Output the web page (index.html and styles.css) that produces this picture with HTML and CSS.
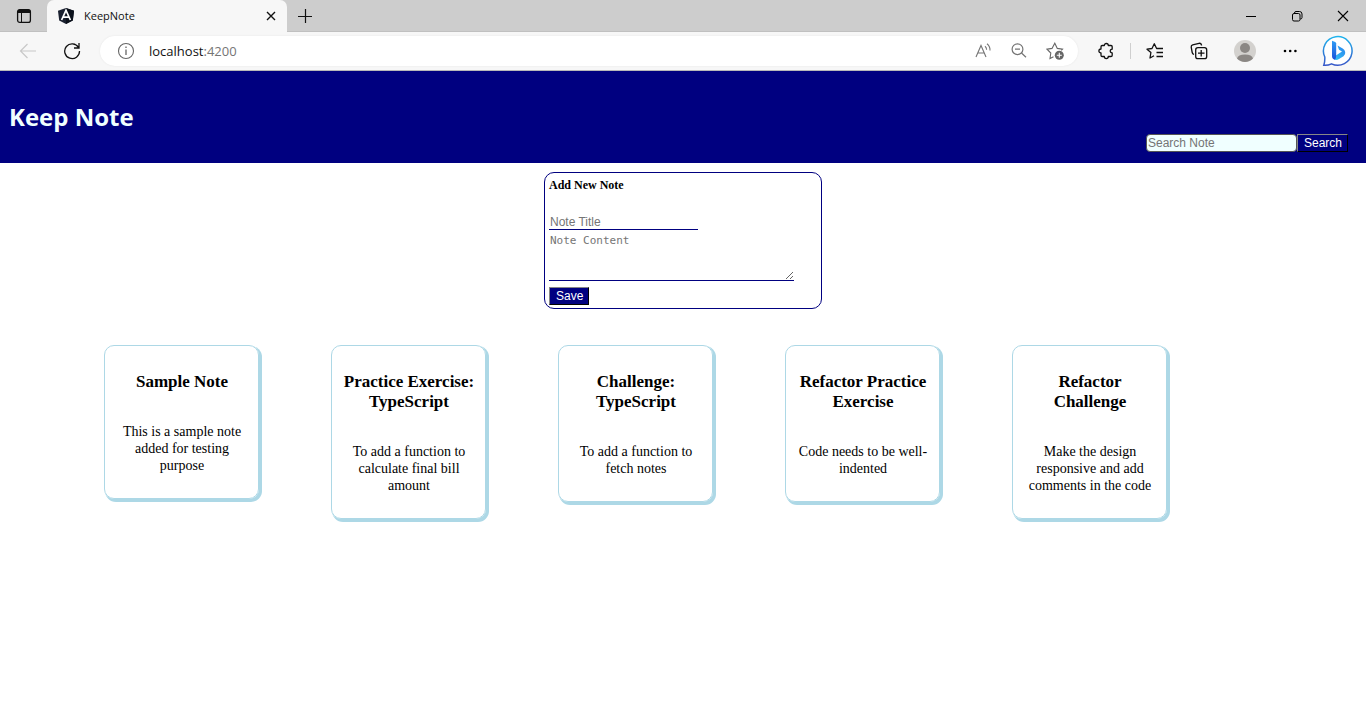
FILE: index.html
```html
<!DOCTYPE html>
<html lang="en">
<head>
<meta charset="utf-8">
<title>KeepNote</title>
<link rel="stylesheet" href="styles.css">
</head>
<body>
<div class="browser">
  <div class="tab-strip">
    <button class="icon-btn tab-actions" aria-label="Tab actions"><svg width="16" height="16" viewBox="0 0 16 16"><rect x="1.6" y="1.6" width="12.8" height="12.8" rx="2.2" fill="none" stroke="#111" stroke-width="1.3"/><path d="M1.6 5V3.6a2 2 0 0 1 2-2h8.8a2 2 0 0 1 2 2V5z" fill="#111"/><path d="M5.500 5v9" stroke="#111"/></svg></button>
    <div class="tab">
      <svg width="18" height="18" viewBox="0 0 18 18"><path d="M9 1 17 3.7 15.8 13.6 9 17 2.2 13.6 1 3.7z" fill="#1b2130"/><path d="M9 1 17 3.7 15.8 13.6 9 17z" fill="#0c111b"/><path d="M4.6 13 9 3.4 13.4 13M6.4 10.2h5.2" fill="none" stroke="#fff" stroke-width="1.7"/></svg>
      <span class="tab-title">KeepNote</span>
      <button class="icon-btn" aria-label="Close tab"><svg width="10" height="10" viewBox="0 0 10 10"><path d="M1 1l8 8M9 1l-8 8" stroke="#111" stroke-width="1.4"/></svg></button>
    </div>
    <button class="icon-btn new-tab" aria-label="New tab"><svg width="16" height="16" viewBox="0 0 16 16"><path d="M8.5 1v14M1 8.500h14" stroke="#111" stroke-width="1.2"/></svg></button>
    <div class="window-controls">
      <button class="icon-btn" aria-label="Minimize"><svg width="12" height="12" viewBox="0 0 12 12"><path d="M1 6.500h10" stroke="#000"/></svg></button>
      <button class="icon-btn" aria-label="Restore"><svg width="12" height="12" viewBox="0 0 12 12" fill="none" stroke="#000"><rect x="1.500" y="3.500" width="7.500" height="7.500" rx="1.500"/><path d="M3.500 3.300V3Q3.500 1.500 5 1.500h3.500q2.500 0 2.500 2.500v3.500q0 1.500-1.700 1.500"/></svg></button>
      <button class="icon-btn" aria-label="Close window"><svg width="12" height="12" viewBox="0 0 12 12"><path d="M1 1l10 10M11 1 1 11" stroke="#000" stroke-width="1.1"/></svg></button>
    </div>
  </div>
  <div class="toolbar">
    <button class="icon-btn nav-btn" aria-label="Back"><svg width="18" height="18" viewBox="0 0 18 18"><path d="M17 9H1.500M8.500 2 1.500 9l7 7" fill="none" stroke="#c8c8c8" stroke-width="1.2"/></svg></button>
    <button class="icon-btn nav-btn" aria-label="Refresh"><svg width="18" height="18" viewBox="0 0 18 18"><path d="M15.500 5.500A7.400 7.400 0 1 0 16.500 9M16 1v5h-5" fill="none" stroke="#111" stroke-width="1.3"/></svg></button>
    <div class="address">
      <svg width="18" height="18" viewBox="0 0 18 18"><circle cx="9" cy="9" r="7.500" fill="none" stroke="#666" stroke-width="1.1"/><path d="M9 7.500v5.500M9 4.600v1.500" stroke="#666" stroke-width="1.3"/></svg>
      <span class="url">localhost<span class="port">:4200</span></span>
      <div class="address-actions">
        <button class="icon-btn" aria-label="Read aloud"><svg width="18" height="18" viewBox="0 0 18 18" fill="none" stroke="#757575" stroke-width="1.1"><path d="M2 15 7 3.500l5 11.500M3.800 11h6.400M11 4.200q1.600 1.300 1.600 3.600M13 1.800q3.200 2.600 3 6.700"/></svg></button>
        <button class="icon-btn" aria-label="Zoom out"><svg width="18" height="18" viewBox="0 0 18 18" fill="none" stroke="#757575" stroke-width="1.200"><circle cx="7.500" cy="7.200" r="5.400"/><path d="M5 7.200h5M11.500 11l4.500 4.300"/></svg></button>
        <button class="icon-btn" aria-label="Add to favorites"><svg width="18" height="18" viewBox="0 0 18 18"><path d="M7.500 14.800 4 16.500l.8-5.500L1 7.200l5-.8L8.800 1.200l2.500 5.200 5.200.800-1.200 1.200" fill="none" stroke="#666" stroke-width="1.100"/><circle cx="13.300" cy="13.300" r="4.500" fill="#666"/><path d="M13.300 10.800v5M10.800 13.300h5" stroke="#fff" stroke-width="1.100"/></svg></button>
      </div>
    </div>
    <div class="browser-actions">
      <button class="icon-btn" aria-label="Extensions"><svg width="18" height="18" viewBox="0 0 18 18" fill="none" stroke="#111" stroke-width="1.300" stroke-linejoin="round"><path d="M5.200 3.500H7.300C7.300.800 11.300.800 11.300 3.500H14q1.200 0 1.200 1.200V7.200C12.600 7 12.600 11 15.200 10.800v2.500q0 1.200-1.200 1.200H11.300C11.300 17.200 7.300 17.200 7.300 14.500H5.200Q4 14.500 4 13.300V11C1.200 11 1.200 7 4 7V4.700Q4 3.500 5.200 3.500z"/></svg></button>
      <span class="divider"></span>
      <button class="icon-btn" aria-label="Favorites"><svg width="18" height="18" viewBox="0 0 18 18" fill="none" stroke="#111" stroke-width="1.300" stroke-linejoin="round"><path d="M8 13.800 4 16l.900-5.500L1 7.200l5-.7L8.300 1.800l2.300 4.700H17M10.500 10.500H17M10.500 14.500H17"/></svg></button>
      <button class="icon-btn" aria-label="Collections"><svg width="18" height="18" viewBox="0 0 18 18" fill="none" stroke="#111" stroke-width="1.300"><path d="M4 12.500Q2.500 12 2.200 10.500L1.200 5.200Q1 3.300 2.700 2.800L9 1.300Q11 1 11.500 3v.5"/><rect x="5.700" y="5.700" width="11" height="11" rx="2.200"/><path d="M11.200 8v6.500M8 11.200h6.500"/></svg></button>
      <button class="icon-btn avatar" aria-label="Profile"><svg width="22" height="22" viewBox="0 0 22 22"><circle cx="11" cy="11" r="11" fill="#d3d1ce"/><circle cx="11" cy="8" r="5" fill="#8b8784"/><path d="M3 18.500q1-4 8-4t8 4a11 11 0 0 1-16 0" fill="#8b8784"/></svg></button>
      <button class="icon-btn more" aria-label="Settings and more"><svg width="16" height="16" viewBox="0 0 16 16"><circle cx="3" cy="8" r="1.300"/><circle cx="8.200" cy="8" r="1.300"/><circle cx="13.400" cy="8" r="1.300"/></svg></button>
      <button class="icon-btn bing" aria-label="Discover"><svg width="32" height="32" viewBox="0 0 32 32"><defs><linearGradient id="ring" x1="0" y1="0" x2="0" y2="1"><stop offset="0" stop-color="#20b4ed"/><stop offset="1" stop-color="#3757c8"/></linearGradient><linearGradient id="stem" x1="0" y1="0" x2="0" y2="1"><stop offset="0" stop-color="#2f9df5"/><stop offset="1" stop-color="#1a50d8"/></linearGradient><linearGradient id="bowl" x1="1" y1="0" x2="0" y2="1"><stop offset="0" stop-color="#2a80ec"/><stop offset="1" stop-color="#35c8f5"/></linearGradient></defs><path d="M1.800 30.200Q3 27 2.800 22A14.300 14.300 0 1 1 9.500 28.800Q6 30.500 1.800 30.200z" fill="#fff" stroke="url(#ring)" stroke-width="1.500"/><path d="M15.500 10.500l1.500 4.300 3 1.700-8 5.300q-1.500 2.700 2 3.200 1.500 0 3-1l4.500-2.800q2.200-1.700 1.700-4.200-.4-2.200-2.500-3.400z" fill="url(#bowl)"/><path d="M10 5.800l3.200 1.300q1 .5 1 1.500v12q0 2.400-1.200 4.200Q10 24.200 10 21z" fill="url(#stem)"/></svg></button>
    </div>
  </div>
</div>

<header class="header">
  <h1 class="brand">Keep Note</h1>
  <form class="search">
    <input class="search-input" type="text" placeholder="Search Note" aria-label="Search Note">
    <button class="btn" type="button">Search</button>
  </form>
</header>

<main>
  <form class="note-form">
    <h2 class="form-title">Add New Note</h2>
    <input class="field title-field" type="text" placeholder="Note Title" aria-label="Note Title">
    <textarea class="field content-field" placeholder="Note Content" aria-label="Note Content"></textarea>
    <button class="btn" type="button">Save</button>
  </form>
  <section class="notes">
    <article class="note"><h3>Sample Note</h3><p>This is a sample note added for testing purpose</p></article>
    <article class="note"><h3>Practice Exercise: TypeScript</h3><p>To add a function to calculate final bill amount</p></article>
    <article class="note"><h3>Challenge: TypeScript</h3><p>To add a function to fetch notes</p></article>
    <article class="note"><h3>Refactor Practice Exercise</h3><p>Code needs to be well-indented</p></article>
    <article class="note"><h3>Refactor Challenge</h3><p>Make the design responsive and add comments in the code</p></article>
  </section>
</main>
</body>
</html>
```
FILE: styles.css
```css
* {
  box-sizing: border-box;
}

body {
  margin: 0;
  background: #fff;
  color: #000;
  font-family: "Liberation Serif", "Times New Roman", serif;
}

/* Browser frame */
.browser {
  background: #f7f7f7;
  border-bottom: 1px solid #b9b9b9;
  font-family: "Open Sans", "Segoe UI", sans-serif;
}

.icon-btn {
  display: flex;
  align-items: center;
  justify-content: center;
  padding: 0;
  border: 0;
  background: none;
}

.tab-strip {
  display: flex;
  height: 32px;
  background: #cdcdcd;
  box-shadow: inset 0 -1px #c0c0c0;
}

.tab-actions {
  width: 47px;
}

.tab {
  display: flex;
  align-items: center;
  gap: 9px;
  width: 240px;
  padding: 0 11px 0 10px;
  border-radius: 7px 7px 0 0;
  background: #f7f7f7;
}

.tab-title {
  flex: 1;
  padding-bottom: 2px;
  font-size: 11px;
  color: #111;
}

.new-tab {
  width: 35px;
}

.window-controls {
  display: flex;
  margin-left: auto;
}

.window-controls .icon-btn {
  width: 46px;
}

.toolbar {
  display: flex;
  align-items: center;
  height: 38px;
}

.nav-btn {
  width: 44px;
}

.nav-btn:first-child {
  margin-left: 6px;
}

.address {
  display: flex;
  flex: 1;
  align-items: center;
  gap: 14px;
  height: 30px;
  margin-left: 6px;
  padding: 0 14px 0 17px;
  border-radius: 15px;
  background: #fff;
  box-shadow: 0 0 2px #e4e4e4;
}

.url {
  font-size: 13px;
  color: #111;
}

.port {
  color: #757575;
}

.address-actions {
  display: flex;
  gap: 18px;
  margin-left: auto;
}

.browser-actions {
  display: flex;
  align-items: center;
  padding: 0 12px 0 19px;
}

.divider {
  width: 1px;
  height: 16px;
  margin: 0 15px;
  background: #cfcfcf;
}

.browser-actions .icon-btn + .icon-btn {
  margin-left: 26px;
}

.browser-actions .icon-btn + .bing {
  margin-left: 24px;
}

/* Page header */
.header {
  min-height: 92px;
  padding: 29px 18px 11px 9px;
  background: navy;
}

.brand {
  margin: 0;
  color: azure;
  font: bold 24px/34px "Open Sans", "Segoe UI", sans-serif;
}

.search {
  display: flex;
  justify-content: flex-end;
}

.search-input {
  width: 151px;
  height: 18px;
  padding: 1px;
  border: 1px solid #555;
  border-radius: 4px;
  background: azure;
  font: 12px "Liberation Sans", Arial, sans-serif;
}

.btn {
  height: 18px;
  padding: 0 5px 0 6px;
  border: 1px outset #333;
  background: navy;
  color: #fff;
  font: 12px/16px "Liberation Sans", Arial, sans-serif;
}

::placeholder {
  color: #757575;
}

/* New note form */
.note-form {
  display: flex;
  flex-direction: column;
  align-items: flex-start;
  width: 278px;
  margin: 9px auto 0;
  padding: 4px 4px 3px;
  border: 1px solid navy;
  border-radius: 10px;
}

.form-title {
  margin: 0 0 21px;
  font-size: 12px;
  line-height: 16px;
}

.field {
  border: 0;
  border-bottom: 1px solid navy;
  background: none;
}

.title-field {
  width: 149px;
  height: 16px;
  padding: 0 1px;
  font: 12px "Liberation Sans", Arial, sans-serif;
}

.content-field {
  width: 245px;
  height: 49px;
  margin: 2px 0 6px;
  padding: 2px 1px 0;
  font: 11px "DejaVu Sans Mono", monospace;
}

/* Note cards */
.notes {
  display: flex;
  flex-wrap: wrap;
  align-items: flex-start;
  gap: 36px 72px;
  padding: 36px 104px;
}

.note {
  width: 155px;
  padding: 26px 9px 24px 10px;
  border: 1px solid lightblue;
  border-radius: 10px;
  box-shadow: 2px 2px 0 1px lightblue;
  text-align: center;
}

.note h3 {
  margin: 0 0 31px;
  font-size: 17px;
  line-height: 20px;
}

.note p {
  margin: 0;
  font-size: 14px;
  line-height: 17px;
}
```
